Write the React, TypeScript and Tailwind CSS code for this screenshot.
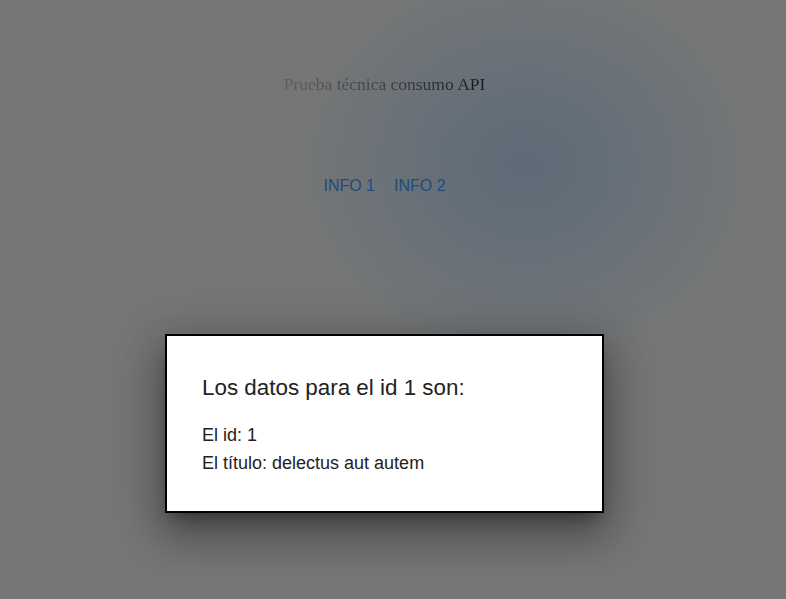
import React from "react";

export default function App() {
  return (
    <div className="relative min-h-[599px] w-full overflow-hidden bg-[#757676] bg-[radial-gradient(ellipse_230px_200px_at_525px_165px,#5f6a77_0%,#677079_45%,#757676_100%)] pr-[17px]">
      <div className="flex flex-col items-center pt-[72px]">
        <h1 className="bg-[linear-gradient(90deg,#5f5f5f_0%,#444_45%,#1c1c1c_100%)] bg-clip-text text-[17.5px] leading-[24px] text-transparent [font-family:'Liberation_Serif',serif]">
          Prueba técnica consumo API
        </h1>
        <nav className="mt-[80px] flex gap-[19px] text-[16px] leading-[20px] text-[#1d4c7d] [font-family:'Liberation_Sans',Arial,sans-serif]">
          <span>INFO 1</span>
          <span>INFO 2</span>
        </nav>
      </div>

      <div className="absolute inset-0 pr-[17px]">
        <div className="mx-auto mt-[334px] w-[439px] border-2 border-black bg-white px-[35px] pt-[37px] pb-[34px] text-[#222] shadow-[0_11px_15px_-7px_rgba(0,0,0,0.35),0_24px_38px_3px_rgba(0,0,0,0.22),0_9px_46px_8px_rgba(0,0,0,0.2)] [font-family:'Liberation_Sans',Arial,sans-serif]">
          <h2 className="text-[22.4px] leading-[30px]">Los datos para el id 1 son:</h2>
          <p className="mt-[18px] text-[18px] leading-[28px]">El id: 1</p>
          <p className="text-[18px] leading-[28px]">El título: delectus aut autem</p>
        </div>
      </div>
    </div>
  );
}
